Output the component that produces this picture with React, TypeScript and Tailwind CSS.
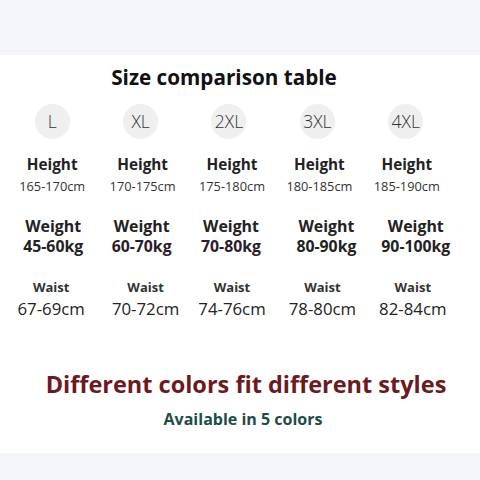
const sizes = [
  { size: 'L', height: '165-170cm', weight: '45-60kg', waist: '67-69cm' },
  { size: 'XL', height: '170-175cm', weight: '60-70kg', waist: '70-72cm' },
  { size: '2XL', height: '175-180cm', weight: '70-80kg', waist: '74-76cm' },
  { size: '3XL', height: '180-185cm', weight: '80-90kg', waist: '78-80cm' },
  { size: '4XL', height: '185-190cm', weight: '90-100kg', waist: '82-84cm' },
];

// small per-column nudges, the source picture is not on an even grid
const nudge = {
  circle: ['', '', '', '', ''],
  height: ['', 'translate-x-[2px]', 'translate-x-[3px]', 'translate-x-[2px]', 'translate-x-[1px]'],
  weight: ['translate-x-[1px]', 'translate-x-[1px]', 'translate-x-[2px]', 'translate-x-[9px]', 'translate-x-[10px]'],
  waist: ['-translate-x-[1px]', 'translate-x-[5px]', 'translate-x-[3px]', 'translate-x-[5px]', 'translate-x-[7px]'],
};

function Row({ children }: { children: React.ReactNode }) {
  return <div className="grid grid-cols-5 w-[442px] ml-2">{children}</div>;
}

export default function App() {
  return (
    <div className="w-[480px] h-[480px] bg-[#f4f5f9] pt-[55px] text-[#222]" style={{ fontFamily: '"Open Sans", "Noto Sans", sans-serif' }}>
      <div className="bg-white h-[398px] flex flex-col">
        <h1 className="mt-[10px] h-[24px] leading-[24px] text-[20.7px] font-bold text-center w-[448px] text-[#111]">
          Size comparison table
        </h1>

        <div className="mt-[15px]">
          <Row>
            {sizes.map((s, i) => (
              <div key={s.size} className={`flex justify-center ${nudge.circle[i]}`}>
                <div className="w-[35px] h-[35px] rounded-full bg-[#efefef] flex items-center justify-center text-[17.5px] font-light text-[#333]">
                  {s.size}
                </div>
              </div>
            ))}
          </Row>
        </div>

        <div className="mt-[15px]">
          <Row>
            {sizes.map((s, i) => (
              <div key={s.size} className={`flex flex-col items-center ${nudge.height[i]}`}>
                <span className="text-[15.3px] font-bold leading-[20px]">Height</span>
                <span className="text-[12.8px] leading-[18px] mt-[3px] text-[#333]">{s.height}</span>
              </div>
            ))}
          </Row>
        </div>

        <div className="mt-[21px]">
          <Row>
            {sizes.map((s, i) => (
              <div key={s.size} className={`flex flex-col items-center ${nudge.weight[i]}`}>
                <span className="text-[15.9px] font-bold leading-[20px]">Weight</span>
                <span className={`text-[15.8px] font-bold leading-[20px] ${i === 1 || i === 2 ? 'text-[#2b1b2b]' : ''}`}>{s.weight}</span>
              </div>
            ))}
          </Row>
        </div>

        <div className="mt-[22px]">
          <Row>
            {sizes.map((s, i) => (
              <div key={s.size} className={`flex flex-col items-center ${nudge.waist[i]}`}>
                <span className="text-[13px] font-bold leading-[18px] text-[#333]">Waist</span>
                <span className="text-[16.8px] leading-[22px] mt-[2px]">{s.waist}</span>
              </div>
            ))}
          </Row>
        </div>

        <p className="mt-[50px] text-center text-[23.5px] font-bold leading-[28px] text-[#6b1a22] pl-[12px]">
          Different colors fit different styles
        </p>
        <p className="mt-[11px] text-center text-[16px] font-bold leading-[20px] text-[#1d4d48] pl-[6px]">
          Available in 5 colors
        </p>
      </div>
    </div>
  );
}
